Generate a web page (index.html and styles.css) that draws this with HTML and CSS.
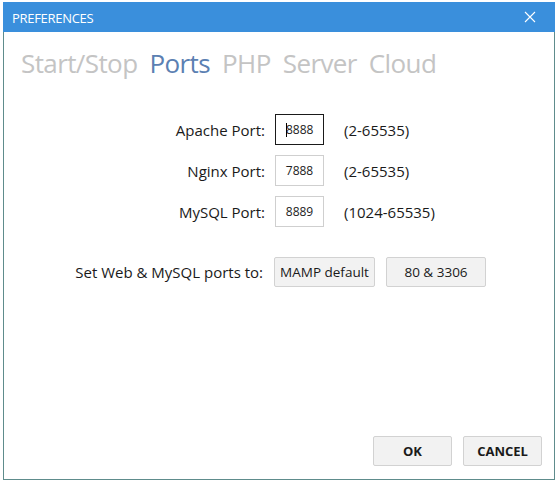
FILE: index.html
```html
<!DOCTYPE html>
<html>
<head>
<meta charset="utf-8">
<link rel="stylesheet" href="styles.css">
</head>
<body>
<div class="window">
  <div class="titlebar">
    <span class="title">PREFERENCES</span>
    <svg class="close" width="12" height="12" viewBox="0 0 12 12"><path d="M1 1 L11 11 M11 1 L1 11" stroke="#ffffff" stroke-width="1.1" fill="none"/></svg>
  </div>
  <div class="tabs">
    <span class="tab">Start/Stop</span>
    <span class="tab active">Ports</span>
    <span class="tab">PHP</span>
    <span class="tab">Server</span>
    <span class="tab">Cloud</span>
  </div>
  <div class="ports">
    <label class="lbl">Apache Port:</label>
    <div class="field focused"><span class="caret"></span>8888</div>
    <span class="range">(2-65535)</span>
    <label class="lbl">Nginx Port:</label>
    <div class="field">7888</div>
    <span class="range">(2-65535)</span>
    <label class="lbl">MySQL Port:</label>
    <div class="field">8889</div>
    <span class="range">(1024-65535)</span>
  </div>
  <div class="setrow">
    <span class="lbl">Set Web &amp; MySQL ports to:</span>
    <button class="btn">MAMP default</button>
    <button class="btn">80 &amp; 3306</button>
  </div>
  <div class="footer">
    <button class="btn dlg">OK</button>
    <button class="btn dlg">CANCEL</button>
  </div>
</div>
</body>
</html>
```

FILE: styles.css
```css
html, body {
  margin: 0;
  padding: 0;
  background: #ffffff;
}
body {
  font-family: "Open Sans", "Noto Sans", sans-serif;
  color: #1a1a1a;
}
.window {
  margin: 2px 0 0 3px;
  width: 550px;
  height: 477px;
  border: 1px solid #5e8c8c;
  border-top: none;
  display: flex;
  flex-direction: column;
  box-sizing: content-box;
}
.titlebar {
  height: 30px;
  margin: 0 -1px;
  background: #3a8fdc;
  color: #ffffff;
  display: flex;
  align-items: center;
  justify-content: space-between;
  padding: 0 19px 0 9px;
}
.title {
  font-size: 13px;
  letter-spacing: -0.3px;
  padding-top: 1px;
}
.close {
  display: block;
}
.tabs {
  display: flex;
  gap: 12px;
  padding: 13px 0 0 17px;
  font-size: 26px;
  line-height: 36px;
  letter-spacing: -0.6px;
}
.tab {
  color: #c4c4c4;
}
.tab.active {
  color: #5b80b2;
}
.ports {
  display: grid;
  grid-template-columns: 261px 49px auto;
  column-gap: 10px;
  row-gap: 10px;
  margin-top: 33px;
  align-items: center;
}
.lbl {
  font-size: 15px;
  text-align: right;
}
.field {
  height: 29px;
  border: 1px solid #cfcfcf;
  font-size: 12px;
  display: flex;
  align-items: center;
  justify-content: center;
  position: relative;
  color: #222;
}
.field.focused {
  border-color: #1a1a1a;
  justify-content: flex-start;
  padding-left: 10px;
}
.caret {
  position: absolute;
  left: 10px;
  top: 8px;
  width: 1px;
  height: 14px;
  background: #000;
}
.range {
  font-size: 15px;
  margin-left: 10px;
}
.setrow {
  display: grid;
  grid-template-columns: 259px 101px 100px;
  column-gap: 11px;
  align-items: center;
  margin-top: 30px;
}
.btn {
  font-family: "Open Sans", "Noto Sans", sans-serif;
  font-size: 13.5px;
  height: 30px;
  width: 100%;
  background: #f2f2f2;
  border: 1px solid #d2d2d2;
  border-radius: 2px;
  color: #1a1a1a;
  padding: 0;
}
.footer {
  margin-top: auto;
  display: flex;
  justify-content: flex-end;
  gap: 11px;
  padding: 0 12px 13px 0;
}
.btn.dlg {
  width: 79px;
  font-weight: 700;
  font-size: 13px;
}
```
